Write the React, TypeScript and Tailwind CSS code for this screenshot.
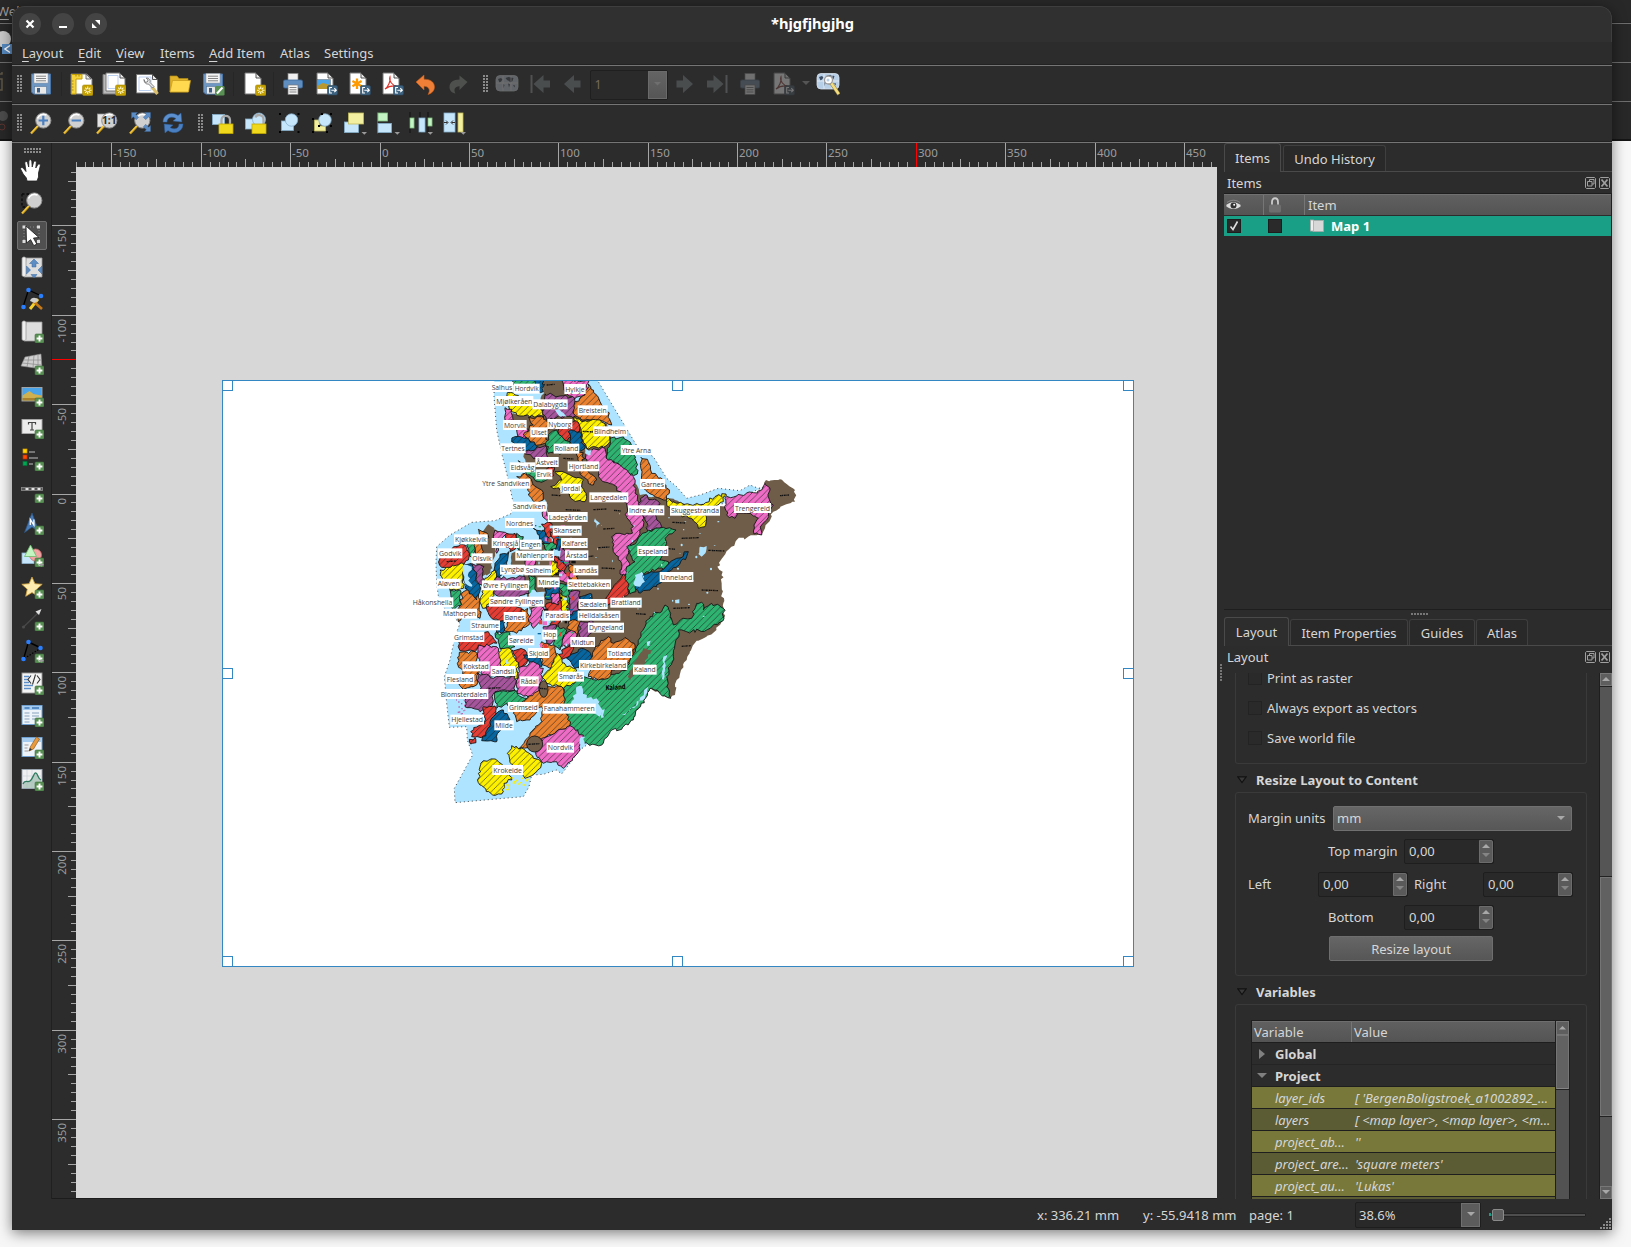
import React from "react";

type Kids = { children?: React.ReactNode };

/* ---------- small shared drawings ---------- */

function Ico({ children, dim }: Kids & { dim?: boolean }) {
  return (
    <svg width="24" height="24" viewBox="0 0 24 24" className={dim ? "shrink-0 opacity-35 grayscale-[60%]" : "shrink-0"}>
      {children}
    </svg>
  );
}

function Tool({ children, dim }: Kids & { dim?: boolean }) {
  return (
    <div className="flex h-8 w-[33px] shrink-0 items-center justify-center">
      <Ico dim={dim}>{children}</Ico>
    </div>
  );
}

function Grip({ cls }: { cls: string }) {
  return (
    <div className={"flex shrink-0 items-center " + cls}>
      <svg width="6" height="18" shapeRendering="crispEdges">
        {[0, 1, 2, 3, 4, 5].map((r) => (
          <g key={r} fill="#8a8a8a">
            <rect x="0" y={r * 3} width="2" height="2" />
            <rect x="3" y={r * 3} width="2" height="2" />
          </g>
        ))}
      </svg>
    </div>
  );
}

function Sep({ cls }: { cls: string }) {
  return (
    <div className={"flex h-6 shrink-0 justify-center " + cls}>
      <div className="h-6 w-px bg-[#262626]" />
    </div>
  );
}

const Plus = () => (
  <g>
    <rect x="15" y="15" width="9" height="9" rx="1.2" fill="#589153" stroke="#3f7040" strokeWidth=".6" />
    <path d="M19.5 16.6v5.8M16.6 19.5h5.8" stroke="#fff" strokeWidth="1.9" />
  </g>
);
const Sun = () => (
  <g>
    <rect x="13.5" y="13" width="10.5" height="10.5" rx="1.5" fill="#c4a000" stroke="#a88a10" strokeWidth=".6" />
    <path d="M18.7 14.5v7.6M15 18.3h7.6M16.2 15.7l5.2 5.2M21.4 15.7l-5.2 5.2" stroke="#fff6c0" strokeWidth="1.1" />
    <circle cx="18.7" cy="18.3" r="1.3" fill="#c4a000" />
  </g>
);
const Exp = () => (
  <g>
    <rect x="13.5" y="13.5" width="10" height="9.5" rx="1.5" fill="#3d6380" stroke="#2d4c63" strokeWidth=".6" />
    <path d="M18 15.5h-2.3v5.5H18M17.3 18.2h4.6M20.3 16.2l2 2-2 2" fill="none" stroke="#fff" strokeWidth="1.1" />
  </g>
);
const Page = () => <path d="M3 1h11l5 5v16H3z" fill="#fff" stroke="#777" strokeWidth="1" />;
const Fold = () => <path d="M14 1v5h5z" fill="#e8e8e8" stroke="#444" strokeWidth=".9" />;
const Floppy = () => (
  <g>
    <path d="M2.5 2h19v20h-17l-2-2z" fill="#6f97c4" stroke="#4a74a6" strokeWidth="1" />
    <rect x="5" y="1.5" width="14" height="9.5" fill="#f4f4f4" stroke="#999" strokeWidth=".5" />
    <path d="M7 4.2h10M7 6.5h10M7 8.8h10" stroke="#777" strokeWidth=".9" />
    <rect x="5.5" y="14.5" width="12" height="7.5" fill="#e8e8e8" stroke="#55779c" strokeWidth=".6" />
    <rect x="8" y="16" width="3" height="4.5" fill="#3c5f88" />
  </g>
);
const Lens = ({ children }: Kids) => (
  <g>
    <path d="M2 22.5l7-7.5" stroke="#f6c636" strokeWidth="2.3" />
    <path d="M2.6 23l7-7.5" stroke="#93701b" strokeWidth=".6" />
    <circle cx="14.3" cy="9.5" r="7.6" fill="#d0d0d0" stroke="#8e8e8e" strokeWidth="1" />
    <path d="M8.5 7.5a6.4 6.4 0 0 1 9-3.4" fill="none" stroke="#fff" strokeWidth="1.6" />
    {children}
  </g>
);
const Printer = () => (
  <g>
    <rect x="7" y="1.5" width="10" height="7" fill="#f0f0f0" stroke="#888" strokeWidth=".7" />
    <rect x="2.5" y="8" width="19" height="8" rx="1.5" fill="#5f8dc0" stroke="#3d6a9c" strokeWidth=".8" />
    <rect x="7" y="13" width="10" height="9.5" fill="#f4f4f4" stroke="#777" strokeWidth=".7" />
    <path d="M8.5 15.5h7M8.5 17.8h7M8.5 20h7" stroke="#777" strokeWidth=".9" />
  </g>
);
const Pdf = () => (
  <g>
    <Page />
    <Fold />
    <path d="M5 17c3-2 6-8 5-12-1.500 4 3 9 6.500 9-5-.6-8.500.6-11.500 3z" fill="none" stroke="#e0342c" strokeWidth="1.2" />
    <Exp />
  </g>
);
const Globe = () => (
  <g>
    <rect x="1" y="3.500" width="22" height="15.500" rx="4" fill="#b8cfe8" stroke="#d5dfea" strokeWidth=".8" />
    <path d="M3 7l3-1 1.500 1.500-1.500 2-1.500 1zM10.500 6l3-1 5 1-1 3-2 1.500-1.500-1.500-2-1zM8 12l1.500 1-1 3.500zM13 11l2 1.500-1 3zM18 13l2 .5-.5 2z" fill="#3d4f66" />
    <path d="M8 4v15M16 4v15M1 11h22" stroke="#eef4fa" strokeWidth=".7" />
  </g>
);
const MapSheet = () => (
  <g>
    <path d="M6 3h16v19H4z" fill="#dedede" stroke="#9a9a9a" strokeWidth=".8" />
    <path d="M2 3.500c0-2 4-2 4 0V20c0 2-4 2-4 0z" fill="#efefef" stroke="#9a9a9a" strokeWidth=".8" />
  </g>
);
const Corner = () => <path d="M18.500 21h5.500l-2.700 2.800z" fill="#9a9a9a" />;
const ArrowLeft = () => <path d="M3 12L13 3v5.500h6.500v7H13V21z" fill="#7b8b98" />;
const ArrowRight = () => <path d="M21 12L11 3v5.500H4.500v7H11V21z" fill="#7b8b98" />;

/* ---------- rulers ---------- */

const STEP = 89.38;
const range = (a: number, b: number) => Array.from({ length: b - a + 1 }, (_, i) => a + i);

function RulerH() {
  return (
    <svg width="1141" height="24" className="block shrink-0" shapeRendering="crispEdges">
      {range(-34, 93).map((i) => {
        const x = Math.floor(304 + (i * STEP) / 10);
        const big = i % 10 === 0;
        const h = big ? 24 : i % 5 === 0 ? 8 : 5;
        return <rect key={i} x={x} y={24 - h} width="1" height={h} fill={i === 60 ? "#ff0000" : "#a6a6a6"} />;
      })}
      {range(-3, 9).map((k) => (
        <text key={k} x={Math.floor(304 + k * STEP) + 2} y="14" fontSize="11.5" fill="#9c9c9c">
          {k * 50}
        </text>
      ))}
    </svg>
  );
}

function RulerV() {
  return (
    <svg width="24" height="1031" className="block shrink-0" shapeRendering="crispEdges">
      {range(-36, 78).map((i) => {
        const y = Math.floor(327 + (i * STEP) / 10);
        const w = i % 10 === 0 ? 24 : i % 5 === 0 ? 8 : 5;
        return <rect key={i} x={24 - w} y={y} width={w} height="1" fill="#a6a6a6" />;
      })}
      <rect x="0" y="192" width="24" height="1" fill="#ff0000" />
      {range(-3, 7).map((k) => (
        <text
          key={k}
          transform={`translate(14 ${Math.floor(327 + k * STEP) + 4}) rotate(-90)`}
          textAnchor="end"
          fontSize="11.5"
          fill="#9c9c9c"
        >
          {k * 50}
        </text>
      ))}
    </svg>
  );
}

/* ---------- map ---------- */

const COLORS: Record<string, string> = {
  y: "#fdf100",
  o: "#e9812f",
  p: "#ee6cc6",
  u: "#a5559b",
  g: "#2eb370",
  b: "#07669f",
  r: "#e33d34",
};

function rough(str: string, amp: number) {
  const n = str.trim().split(/[ ,]+/).map(Number);
  const pts: number[][] = [];
  for (let i = 0; i < n.length; i += 2) pts.push([n[i], n[i + 1]]);
  let seed = 7 + Math.abs(Math.round(n[0] * 13 + n[1] * 7));
  const rnd = () => {
    seed = (seed * 1103515245 + 12345) % 2147483648;
    return seed / 2147483648 - 0.5;
  };
  const out: string[] = [];
  pts.forEach((p, i) => {
    const q = pts[(i + 1) % pts.length];
    const len = Math.hypot(q[0] - p[0], q[1] - p[1]);
    const k = Math.max(1, Math.round(len / 9));
    for (let j = 0; j < k; j++) {
      const t = j / k;
      const a = j === 0 ? 0 : amp;
      out.push(`${(p[0] + (q[0] - p[0]) * t + rnd() * a).toFixed(1)},${(p[1] + (q[1] - p[1]) * t + rnd() * a).toFixed(1)}`);
    }
  });
  return out.join(" ");
}

const SEA =
  "283,30 282,80 290,180 305,250 325,330 340,400 335,430 285,452 215,457 150,495 110,530 108,580 110,640 118,700 180,760 165,800 150,870 133,920 140,1000 148,1072 200,1070 202,1110 218,1155 163,1255 165,1298 300,1286 370,1280 387,1250 395,1215 430,1213 470,1200 485,1212 540,1140 560,1125 620,1000 560,800 700,600 850,420 975,400 1095,350 1075,355 1050,345 1020,362 955,355 900,375 860,385 830,350 800,325 760,260 715,235 592,30";

const LAND =
  "430,30 490,30 530,100 620,160 640,210 660,300 705,340 720,375 808,385 850,400 975,410 1090,370 1098,330 1140,328 1185,360 1185,395 1120,425 1095,475 1085,492 1010,510 970,560 952,590 968,605 965,640 972,745 940,788 890,812 860,870 830,930 825,975 812,985 740,950 700,960 600,900 500,850 470,760 455,720 420,680 405,650 440,610 470,520 440,450 440,400 400,350 380,310 370,260 385,200 330,140 340,130 420,130 430,60";

const DISTRICTS: [string, string][] = [
  ["g", "340,30 430,30 425,60 345,65"],
  ["b", "405,30 432,30 430,65 408,62"],
  ["p", "485,30 568,30 556,72 522,90 492,60"],
  ["y", "322,68 345,75 400,105 435,122 425,137 370,138 335,125 320,105"],
  ["u", "435,72 480,78 518,80 525,115 520,145 480,140 440,150 428,132 430,100"],
  ["o", "565,42 580,60 600,95 622,125 635,165 600,150 545,150 520,130 525,95 555,75"],
  ["p", "315,113 335,118 345,155 315,150"],
  ["p", "348,175 385,178 375,208 355,205"],
  ["o", "385,142 430,138 445,160 440,225 400,222 370,195 400,165"],
  ["r", "475,170 530,150 538,185 500,213 475,195"],
  ["g", "450,190 470,180 490,205 510,215 520,250 445,250 438,215"],
  ["b", "505,185 538,185 555,235 530,245 510,215"],
  ["y", "522,138 545,155 600,150 635,185 630,215 610,232 560,235 545,205 540,170"],
  ["g", "630,205 670,200 700,235 712,312 680,318 655,280 620,275 622,235"],
  ["b", "345,200 385,205 412,230 395,250 370,240 335,215"],
  ["u", "370,245 440,230 442,260 470,290 425,275"],
  ["r", "440,296 462,290 460,318 445,318"],
  ["o", "528,250 550,248 550,290 590,330 580,345 565,340 540,300"],
  ["p", "560,240 615,235 625,270 660,285 700,320 705,370 732,420 730,470 715,500 690,530 680,560 690,590 675,615 660,612 665,580 640,545 635,500 660,490 690,492 700,470 680,440 680,400 650,350 600,325 595,300 560,290"],
  ["y", "465,305 510,315 550,330 545,350 558,370 555,395 520,390 500,365 452,350 485,330"],
  ["g", "355,272 405,300 450,325 420,335 380,315"],
  ["o", "375,310 400,345 425,360 430,390 410,400 385,375 385,350 350,320"],
  ["u", "735,375 780,400 765,430 785,470 745,485 735,450 715,400"],
  ["o", "723,262 745,275 755,310 790,330 808,370 800,390 760,375 722,350"],
  ["y", "800,387 830,400 900,405 945,380 978,372 970,395 915,435 915,470 895,475 875,445 830,430 805,410"],
  ["p", "975,385 1010,378 1060,368 1085,360 1095,340 1110,360 1105,380 1120,405 1100,450 1085,465 1085,495 1062,492 1062,465 1075,445 1040,430 1010,428 1005,445 980,435"],
  ["g", "727,490 790,472 828,480 800,500 800,520 780,570 805,575 800,595 740,605 715,615 708,665 690,672 672,640 680,590 705,575 690,545 680,530 710,515"],
  ["b", "865,545 860,560 815,600 790,625 770,650 715,668 705,655 720,615 780,605 830,565"],
  ["r", "670,612 685,640 685,672 640,705 610,705 625,675"],
  ["g", "795,705 812,730 820,765 850,745 875,745 890,700 905,697 910,720 935,700 970,715 972,745 920,780 860,785 835,780 820,860 800,920 812,985 750,955 700,1050 665,1078 635,1080 605,1125 540,1120 510,1070 490,1000 490,935 530,920 590,930 650,910 680,900 710,830 735,770 750,740 760,730 785,725"],
  ["o", "585,830 625,800 640,820 675,802 705,825 690,870 635,900 625,925 595,930 565,920 570,880"],
  ["r", "425,462 455,460 458,500 440,510"],
  ["b", "400,475 430,480 455,520 440,530"],
  ["g", "425,520 465,515 470,535 440,548"],
  ["r", "450,485 475,500 480,530 460,520"],
  ["p", "430,415 450,440 440,450 428,440"],
  ["b", "470,510 490,515 490,545 465,550"],
  ["p", "375,570 405,565 405,585 380,590"],
  ["g", "350,490 370,500 365,540 350,530"],
  ["p", "285,480 320,490 300,515 290,550 280,500"],
  ["r", "320,490 345,490 350,530 330,545 320,520"],
  ["o", "215,520 245,515 250,545 230,560"],
  ["g", "200,525 225,520 220,560 205,555"],
  ["o", "235,478 262,490 262,520 245,510"],
  ["r", "165,530 195,525 208,550 205,570 170,600 125,592 116,560"],
  ["y", "120,600 190,580 195,600 190,655 150,660 130,630"],
  ["g", "150,660 180,660 185,705 160,722"],
  ["o", "190,665 225,655 242,690 240,745 205,730 175,755 170,735"],
  ["b", "190,590 215,580 240,650 230,690 195,655"],
  ["u", "215,580 252,590 248,645 235,640"],
  ["b", "300,553 327,545 322,590 290,640 272,625 285,580"],
  ["y", "255,625 285,600 290,640 270,700 248,715 240,690"],
  ["u", "285,625 375,620 388,670 330,692 280,668"],
  ["g", "385,615 405,618 410,665 390,678"],
  ["r", "258,712 330,700 380,725 310,752 275,745"],
  ["o", "330,740 383,715 390,760 350,790 310,780"],
  ["p", "395,715 432,708 425,750 400,775 385,745"],
  ["b", "280,755 315,755 312,785 290,790"],
  ["r", "440,700 490,690 485,735 440,735"],
  ["b", "435,655 480,650 478,680 440,688"],
  ["y", "455,570 475,585 478,615 456,620"],
  ["r", "460,555 500,590 490,610 470,590"],
  ["u", "480,530 500,545 515,590 500,590 475,560"],
  ["p", "475,600 510,610 505,640 480,632"],
  ["o", "505,585 525,590 535,630 512,635"],
  ["g", "480,640 520,655 510,700 490,690"],
  ["p", "455,670 478,670 475,705 455,700"],
  ["y", "480,670 500,680 505,735 485,740"],
  ["u", "505,660 540,665 535,735 505,730"],
  ["b", "540,680 575,672 570,692 540,692"],
  ["b", "505,735 540,715 535,765 510,765"],
  ["r", "455,745 480,745 475,785 455,780"],
  ["o", "505,755 545,750 530,800 500,775"],
  ["u", "540,755 580,755 565,810 540,800"],
  ["p", "490,790 525,785 530,830 485,830"],
  ["u", "430,770 470,765 480,810 440,820"],
  ["g", "470,770 500,780 480,840 460,820"],
  ["r", "485,840 520,820 515,860 480,865"],
  ["o", "425,815 465,830 470,860 450,895 425,880"],
  ["b", "500,865 545,835 572,850 570,895 525,895"],
  ["y", "470,850 500,890 530,900 530,930 490,955 440,940 428,920 455,890"],
  ["g", "285,790 330,790 345,830 330,842 300,835"],
  ["r", "178,805 265,785 290,820 235,830 225,845 180,842"],
  ["o", "178,847 225,845 235,890 230,945 190,958 165,930 195,920 172,880"],
  ["p", "235,825 290,830 305,860 300,915 260,925 235,895"],
  ["y", "300,835 330,835 352,870 355,925 320,918 300,880"],
  ["r", "335,840 375,840 380,880 358,895"],
  ["b", "370,855 425,862 425,890 400,890"],
  ["p", "362,890 400,875 430,895 420,940 415,975 385,985 350,970 350,930"],
  ["u", "232,908 280,925 345,918 345,962 285,965 275,1010 240,1025 195,1010 200,980 240,960"],
  ["g", "285,967 340,962 380,985 370,1010 345,1020 320,1000 290,1015"],
  ["o", "375,990 435,945 490,955 492,1000 510,1065 430,1105 395,1137 355,1137 390,1090 425,1055 425,1010 390,1050 350,1055 340,1030"],
  ["r", "250,1010 285,1008 285,1040 250,1098 215,1100 212,1085 255,1060"],
  ["b", "285,1035 310,1020 330,1050 300,1070 290,1115 245,1112"],
  ["r", "208,1108 225,1103 228,1118 212,1122"],
  ["p", "425,1105 510,1067 550,1095 540,1140 490,1195 470,1175 430,1180 408,1155"],
  ["y", "335,1127 375,1140 425,1180 410,1205 375,1225 360,1190 330,1178 322,1150"],
  ["y", "250,1172 285,1167 320,1200 335,1230 312,1240 310,1265 278,1275 240,1245 235,1210"],
];

const LAKES = [
  "530,950 545,948 560,985 590,985 607,1020 598,1040 580,1030 560,1025 510,1010",
  "900,530 920,528 918,545 905,560 895,552",
  "705,615 725,605 735,635 718,650 700,640",
  "190,585 215,590 205,620 215,650 195,640",
  "555,235 575,240 572,255 555,250",
  "460,540 485,540 480,560 462,558",
  "700,1010 720,985 745,950 742,968 715,1000 680,1028 665,1035",
  "790,860 800,855 795,900 785,920",
  "785,905 796,900 790,930",
  "740,815 752,812 752,826 742,828",
  "465,120 485,125 500,140 480,140",
  "585,445 600,460 590,475",
  "605,1020 615,1018 612,1042 604,1044",
  "825,690 838,688 838,700 826,700",
  "395,660 435,665 430,690 380,700",
  "400,780 425,770 430,800 400,830",
  "318,870 326,865 328,880 318,882",
  "540,1105 556,1100 552,1125 542,1125",
];

const LABELS: [string, number, number, number][] = [
  ["Salhus", 275, 337, 52], ["Hordvik", 344, 416, 57], ["Hylkje", 496, 554, 58], ["Mjølkeråen", 289, 397, 94],
  ["Dalabygda", 400, 500, 104], ["Breistein", 536, 620, 122], ["Morvik", 312, 377, 166], ["Nyborg", 445, 514, 163],
  ["Ulset", 394, 440, 188], ["Blindheim", 582, 678, 185], ["Tertnes", 304, 374, 236], ["Rolland", 464, 535, 237],
  ["Ytre Arna", 665, 753, 241], ["Åstveit", 409, 473, 277], ["Eidsvåg", 332, 403, 293], ["Hjortland", 506, 595, 290],
  ["Ervik", 410, 454, 314], ["Garnes", 723, 792, 343], ["Ytre Sandviken", 247, 388, 342], ["Jordal", 484, 540, 357],
  ["Langedalen", 571, 682, 383], ["Sandviken", 338, 437, 411], ["Indre Arna", 687, 790, 422],
  ["Skuggestranda", 813, 957, 423], ["Trengereid", 1005, 1110, 415], ["Ladegården", 446, 560, 442],
  ["Nordnes", 318, 400, 460], ["Skansen", 461, 542, 483], ["Kjøkkelvik", 165, 260, 509], ["Kringsjå", 278, 355, 520],
  ["Engen", 363, 422, 525], ["Kalfaret", 486, 560, 520], ["Godvik", 117, 184, 551], ["Olsvik", 217, 275, 566],
  ["Møhlenpris", 349, 459, 558], ["Årstad", 498, 562, 557], ["Lyngbø", 303, 372, 600], ["Solheim", 377, 453, 602],
  ["Landås", 523, 592, 602], ["Unneland", 782, 877, 622], ["Aløven", 113, 179, 642], ["Øvre Fyllingen", 249, 385, 647],
  ["Minde", 415, 476, 638], ["Slettebakken", 505, 630, 644], ["Espeland", 715, 802, 544], ["Håkonshella", 38, 157, 698],
  ["Søndre Fyllingen", 270, 430, 696], ["Sædalen", 539, 620, 703], ["Brattland", 634, 722, 699],
  ["Mathopen", 129, 228, 732], ["Bønes", 314, 374, 742], ["Paradis", 436, 507, 738], ["Helldalsåsen", 536, 658, 738],
  ["Straume", 214, 297, 767], ["Dyngeland", 567, 669, 774], ["Grimstad", 162, 250, 802], ["Søreide", 327, 400, 812],
  ["Hop", 430, 469, 795], ["Midtun", 514, 582, 817], ["Skjold", 387, 445, 850], ["Totland", 624, 693, 850],
  ["Kokstad", 190, 266, 890], ["Sandsli", 275, 343, 904], ["Kirkebirkeland", 540, 679, 886], ["Kaland", 702, 767, 900],
  ["Flesland", 140, 220, 928], ["Rådal", 362, 413, 935], ["Smørås", 477, 549, 921], ["Blomsterdalen", 122, 262, 973],
  ["Grimseid", 327, 413, 1012], ["Fanahammeren", 431, 584, 1017], ["Hjellestad", 154, 249, 1050],
  ["Milde", 286, 338, 1067], ["Nordvik", 443, 519, 1134], ["Krokeide", 280, 366, 1201],
];

const SCRIBBLES: [number, number, number][] = [
  [1140, 377, 28], [817, 457, 38], [845, 505, 52], [925, 541, 48], [595, 533, 34], [605, 594, 40], [560, 560, 20],
  [905, 660, 50], [820, 715, 50], [708, 731, 30], [845, 829, 28], [497, 419, 45], [580, 419, 40], [642, 421, 20],
  [610, 477, 34], [490, 265, 30], [440, 45, 24], [548, 184, 32], [385, 1123, 34], [420, 955, 20], [265, 955, 36],
  [805, 536, 22], [140, 575, 28], [455, 375, 26],
];

function MapDrawing() {
  return (
    <svg width="911" height="585" viewBox="0 0 911 585" className="block">
      <defs>
        {Object.entries(COLORS).map(([k, c]) => (
          <pattern key={k} id={"hatch-" + k} width="19" height="19" patternUnits="userSpaceOnUse">
            <rect width="19" height="19" fill={c} />
            <path d="M-3 22L22 -3M-3 3L3 -3M16 22L22 16" stroke="#1c1c1c" strokeWidth="1.7" />
          </pattern>
        ))}
      </defs>
      <g transform="translate(177 -11) scale(.33333)">
        <polygon points={SEA} fill="#aee4ff" stroke="#222" strokeWidth="2.500" strokeDasharray="3 9" />
        <polygon points={rough(LAND, 9)} fill="#6f5d49" />
        <polygon points={rough("225,520 265,463 300,485 285,545 270,610 245,620 225,570", 8)} fill="#6f5d49" />
        <polygon points={rough("335,550 440,500 470,560 460,700 390,720 370,600 335,590", 8)} fill="#6f5d49" />
        {DISTRICTS.map(([c, p], i) => (
          <polygon key={i} points={rough(p, 10)} fill={`url(#hatch-${c})`} stroke="#111" strokeWidth="2.600" strokeLinejoin="round" />
        ))}
        <polygon points={rough("730,835 753,840 735,880 690,932 684,920 700,880", 6)} fill="#6f5d49" />
        <circle cx="404" cy="1122" r="24" fill="#6f5d49" stroke="#111" strokeWidth="2.500" />
        <ellipse cx="431" cy="957" rx="13" ry="25" fill="#6f5d49" stroke="#111" strokeWidth="2.500" />
        {LAKES.map((p, i) => (
          <polygon key={i} points={rough(p, 10)} fill="#aee4ff" />
        ))}
        {range(0, 44).map((i) => (
          <ellipse key={i} cx={560 + ((i * 137) % 400)} cy={430 + ((i * 83) % 320)} rx={1.2 + (i % 3)} ry={1 + ((i * 7) % 4)} fill="#aee4ff" />
        ))}
        {range(0, 60).map((i) => (
          <rect key={i} x={405 + ((i * 47) % 110)} y={465 + ((i * 71) % 390)} width={4 + (i % 4) * 3} height={4 + (i % 3) * 4} fill={["#07669f", "#111", "#e33d34", "#2eb370", "#aee4ff", "#ee6cc6"][i % 6]} />
        ))}
        {range(0, 12).map((i) => (
          <rect key={i} x={168 + ((i * 17) % 26)} y={988 + ((i * 41) % 46)} width={3 + (i % 3)} height="4" fill="#b86ab0" />
        ))}
        {range(0, 9).map((i) => (
          <rect key={i} x={335 + ((i * 11) % 48)} y={1222 + ((i * 7) % 24)} width="7" height="4" fill="#fdf100" />
        ))}
        <rect x="316" y="1245" width="11" height="14" fill="none" stroke="#fdf100" strokeWidth="3" />
        {SCRIBBLES.map(([x, y, w], i) => (
          <path key={i} d={`M${x} ${y}l${w} ${i % 2 ? 2 : -2}`} fill="none" stroke="#111" strokeWidth="4" strokeDasharray="5 1 3 2" />
        ))}
        <text x="617" y="961" fontSize="21" fontWeight="700" fill="#000" textLength="60" lengthAdjust="spacingAndGlyphs" transform="rotate(-4 617 961)">
          Kaland
        </text>
        {LABELS.map(([t, a, b, y]) => (
          <g key={t}>
            <rect x={a - 3} y={y - 16} width={b - a + 6} height="30" fill="#fff" />
            <text x={a} y={y + 7} fontSize="21.500" fill="#3c3c3c" textLength={b - a} lengthAdjust="spacingAndGlyphs" fontFamily="Open Sans, sans-serif">
              {t}
            </text>
          </g>
        ))}
      </g>
    </svg>
  );
}

/* ---------- panel widgets ---------- */

function Tri({ dir, fill = "#a8a8a8", w = 9 }: { dir: "up" | "down" | "right"; fill?: string; w?: number }) {
  const d = dir === "up" ? "M0 5L5 0l5 5z" : dir === "down" ? "M0 0h10L5 5z" : "M2 -2l6 5-6 5z";
  return (
    <svg width={w} height={w * 0.6} viewBox="0 0 10 6" className="block overflow-visible">
      <path d={d} fill={fill} />
    </svg>
  );
}

function Spin() {
  return (
    <div className="flex h-[25px] w-[90px] shrink-0 rounded-[2px] border border-[#1e1e1e] bg-[#292929]">
      <div className="flex flex-1 items-center pl-[4px]">0,00</div>
      <div className="flex w-[14px] flex-col items-center justify-evenly rounded-r-[2px] border border-[#6c6c6c] bg-[#5a5a5a]">
        <Tri dir="up" w={8} />
        <Tri dir="down" w={8} fill="#858585" />
      </div>
    </div>
  );
}

function DockTitle({ title, cls }: { title: string; cls: string }) {
  return (
    <div className={"flex shrink-0 items-center pr-[1px] pl-[3px] " + cls}>
      <span className="flex-1">{title}</span>
      <svg width="26" height="12" viewBox="0 0 26 12" fill="none" stroke="#a0a0a0" strokeWidth="1">
        <path d="M1.500.5h8l1 1v9l-1 1h-8l-1-1v-9z" />
        <path d="M4.500 4.500v-2h4.500v4.500H7M2.500 4.500h4.500v4.500H2.500z" />
        <path d="M15.500.5h8l1 1v9l-1 1h-8l-1-1v-9z" />
        <path d="M16.500 2.500l6 7M22.500 2.500l-6 7" strokeWidth="1.800" />
      </svg>
    </div>
  );
}

function Tab({ label, active, cls }: { label: string; active?: boolean; cls: string }) {
  return (
    <div
      className={
        (active
          ? "h-[29px] border-[#4a4a4a] bg-[#2d2d2d] pb-px "
          : "mt-[2px] h-[26px] border-[#3f3f3f] bg-[#292929] ") +
        "flex shrink-0 items-center justify-center rounded-t-[3px] border border-b-0 " +
        cls
      }
    >
      {label}
    </div>
  );
}

function Check({ label, cls }: { label: string; cls?: string }) {
  return (
    <div className={"flex h-[14px] items-center gap-[5px] pl-[12px] " + (cls ?? "")}>
      <div className="h-[14px] w-[14px] border border-[#232323] bg-[#2a2a2a]" />
      <span className="leading-[14px]">{label}</span>
    </div>
  );
}

function Head({ label, cls }: { label: string; cls: string }) {
  return (
    <div className={"flex shrink-0 items-center gap-[9px] pl-[2px] font-bold " + cls}>
      <svg width="10" height="8" viewBox="0 0 10 8">
        <path d="M.8.8h8.400L5 6.500z" fill="#3a3a3a" stroke="#111" strokeWidth="1.200" />
      </svg>
      {label}
    </div>
  );
}

const ROWS: [string, string][] = [
  ["layer_ids", "[ 'BergenBoligstroek_a1002892_..."],
  ["layers", "[ <map layer>, <map layer>, <m..."],
  ["project_ab...", "''"],
  ["project_are...", "'square meters'"],
  ["project_au...", "'Lukas'"],
  ["", ""],
];

const SIDE: React.ReactNode[] = [
  <path key="0" d="M7 22l-.6-3L3.200 15 .8 10.400c-.8-1.600 1.200-2.700 2.300-1.300L6 12.500 4.800 4c-.2-1.800 2.300-2.200 2.700-.4L8.700 8l.2-6c0-1.800 2.700-1.800 2.900 0L12.200 8l1.400-5c.5-1.600 2.900-1.200 2.700.5L15.800 9l2-3.300c.9-1.400 3-.5 2.500 1.100L18.500 14v4l-1.500 4z" fill="#fff" stroke="#222" strokeWidth=".8" />,
  <g key="1"><path d="M2 3h11M2 3v13h10" fill="none" stroke="#0a0a0a" strokeWidth="1.300" strokeDasharray="2.500 2" /><Lens /></g>,
  <g key="2"><rect x="4" y="4" width="15" height="14" fill="none" stroke="#999" strokeWidth=".8" strokeDasharray="1 2" /><path d="M2.500 2.500h3v3h-3zM17 2.500h3v3h-3zM2.500 17h3v3h-3zM17 17h3v3h-3z" fill="#ddd" /><path d="M6 3l13 11.500-5.500.6 3.300 6-3 1.600-3.200-6L6.500 20z" fill="#fff" stroke="#222" strokeWidth=".9" /></g>,
  <g key="3"><MapSheet /><path d="M14 4l4.500 4.500H16V12h-4V8.500H9.500zM6.500 11l4 4-4 4zM22 11l-4 4 4 4zM14 23l-3-3.500h6z" fill="#5c8cc4" stroke="#39689c" strokeWidth=".5" /></g>,
  <g key="4"><path d="M8.500 3L3 20M8.500 3l13 6" stroke="#000" strokeWidth="1.300" /><path d="M10 22l8-10" stroke="#f4cf30" strokeWidth="3" /><path d="M22 22l-9-8" stroke="#c67a17" strokeWidth="2.600" /><path d="M10 14c1-4 6-4 8-1l-3 3z" fill="#cfcfcf" /><circle cx="8.500" cy="3" r="2.300" fill="#2a7fff" /><circle cx="21" cy="9" r="2.300" fill="#2a7fff" /><circle cx="3.500" cy="20" r="2.300" fill="#2a7fff" /></g>,
  <g key="5"><MapSheet /><Plus /></g>,
  <g key="6"><path d="M5 6l16-3 1 15-21-3z" fill="#cfcfcf" stroke="#888" strokeWidth=".6" /><path d="M4 9l18 0M2.500 12l19 2M9 5l-2 11M14 4l-1 13M18 3.500l0 14" fill="none" stroke="#8a8a8a" strokeWidth=".7" /><Plus /></g>,
  <g key="7"><rect x="2" y="4.500" width="20" height="13.500" fill="#4ba3e8" stroke="#aaa" strokeWidth=".9" /><path d="M2.500 12.500l7-4.500 4 3 8 1.500v5h-19z" fill="#d0b04c" /><path d="M2.500 15h19v2.500h-19z" fill="#a9812e" /><Plus /></g>,
  <g key="8"><rect x="2" y="4.500" width="20" height="14" fill="#ececec" stroke="#aaa" strokeWidth=".9" /><path d="M8.500 9.500V7.500h7v2M12 7.500v7.500M10 15h4" fill="none" stroke="#444" strokeWidth="1.200" /><Plus /></g>,
  <g key="9"><rect x="3" y="2" width="4" height="4" fill="#ffd400" stroke="#d39c00" strokeWidth=".7" /><rect x="3" y="8" width="4" height="4" fill="#ff4a00" stroke="#b73200" strokeWidth=".7" /><rect x="3" y="14.500" width="4" height="4" fill="#00a651" stroke="#00743a" strokeWidth=".7" /><path d="M9 5h6M9 11h9M9 17h4" stroke="#8d8d8d" strokeWidth="1.500" /><Plus /></g>,
  <g key="10"><rect x="1" y="8" width="22" height="4" fill="#555" /><rect x="1.500" y="8.500" width="21" height="3" fill="none" stroke="#888" strokeWidth=".8" /><path d="M5.500 10h15" stroke="#e4e4e4" strokeWidth="1.800" strokeDasharray="3 3" /><Plus /></g>,
  <g key="11"><path d="M12 2l7 19-7-5-7.500 5.500z" fill="#4a7db8" stroke="#2d5788" strokeWidth=".7" /><path d="M10.300 14V8.500l3.600 5.500V8.500" fill="none" stroke="#fff" strokeWidth="1.300" /><Plus /></g>,
  <g key="12"><rect x="2" y="10" width="12" height="10.500" fill="#c6e6fb" stroke="#8fb4cf" strokeWidth=".8" /><circle cx="15.500" cy="12" r="6" fill="#f2a3a3" stroke="#d06c6c" strokeWidth=".8" /><path d="M10.500 2l6 11.500h-12z" fill="#c2f5c2" stroke="#6fb96f" strokeWidth=".8" /><Plus /><Corner /></g>,
  <g key="13"><path d="M12 2l2.900 6.700 7.300.6-5.500 4.900 1.600 7.100L12 17.600l-6.300 3.700 1.600-7.100L1.800 9.300l7.300-.6z" fill="#fdebb0" stroke="#cfa13b" strokeWidth=".8" /><Plus /></g>,
  <g key="14"><path d="M3.500 20L18 6" stroke="#484848" strokeWidth="1.300" /><path d="M21.500 2l-2.500 6-3.500-3.500z" fill="#e0e0e0" /><circle cx="3.500" cy="20" r="1.500" fill="#4c4c4c" /><Plus /></g>,
  <g key="15"><path d="M8.500 3L3.500 20M8.500 3l12.500 6" stroke="#000" strokeWidth="1.400" /><path d="M21 9L3.500 20" stroke="#000" strokeWidth="1.200" strokeDasharray="1.500 1.500" /><circle cx="8.500" cy="3" r="2.300" fill="#2a7fff" /><circle cx="20.500" cy="9" r="2.300" fill="#2a7fff" /><circle cx="3.500" cy="20" r="2.300" fill="#2a7fff" /><Plus /><Corner /></g>,
  <g key="16"><rect x="2" y="2" width="20" height="20" fill="#f4f4f4" stroke="#999" strokeWidth=".9" /><path d="M4 5.500h5M4 8.500h4M4 11.500h5M4 14.500h9M4 17.500h7" stroke="#5d8fca" strokeWidth="1.700" /><path d="M11 4.500L8 8.500l3 4M17 4.500l3 4-3 4M15.500 3.500l-3 10" fill="none" stroke="#333" strokeWidth="1.100" /><Plus /></g>,
  <g key="17"><rect x="2" y="2.500" width="20" height="19" fill="#eef3f9" stroke="#6f9fd0" strokeWidth="1" /><rect x="2.500" y="3" width="19" height="4" fill="#a5cbee" /><path d="M4.500 5h5M12 5h7" stroke="#3f78b8" strokeWidth="1.400" /><path d="M4.500 10h5M12 10h7M4.500 13h5M12 13h7M4.500 16h5M12 16h3M4.500 19h5" stroke="#8aa4c0" strokeWidth="1.200" /><Plus /></g>,
  <g key="18"><rect x="2" y="2.500" width="20" height="19" fill="#eef3f9" stroke="#6f9fd0" strokeWidth="1" /><rect x="2.500" y="3" width="19" height="4" fill="#a5cbee" /><path d="M4.500 10h4M4.500 13h3M4.500 16h4" stroke="#999" strokeWidth="1.200" /><path d="M9 16l1.500-4.500L16.500 2l3 2-6 10z" fill="#e99a3c" stroke="#8f5a1c" strokeWidth=".7" /><path d="M9 16l1-3 2 1.500z" fill="#333" /><Plus /></g>,
  <g key="19"><rect x="2" y="2.500" width="20" height="19" fill="#f0f0f0" stroke="#9ba8b5" strokeWidth=".9" /><path d="M7 3v18M12 3v18M2 9h20M2 15h20" stroke="#cfd6dc" strokeWidth=".8" /><path d="M3 17c2-5 4-1 7-3s4-9 6-8 2 6 5 7v8H3z" fill="#9ebdb0" opacity=".7" /><path d="M3 17c2-5 4-1 7-3s4-9 6-8 2 6 5 7" fill="none" stroke="#2f7a5f" strokeWidth="1.300" /><Plus /></g>,
];

const HANDLES = [
  "left-[-1px] top-[-1px]", "left-[449px] top-[-1px]", "right-[-1px] top-[-1px]",
  "left-[-1px] top-[287px]", "right-[-1px] top-[287px]",
  "left-[-1px] bottom-[-1px]", "left-[449px] bottom-[-1px]", "right-[-1px] bottom-[-1px]",
];

const Menu = ({ first, rest, cls, plain }: { first: string; rest: string; cls: string; plain?: boolean }) => (
  <span className={"shrink-0 " + cls}>
    <span className={plain ? "" : "underline decoration-1 underline-offset-[3px]"}>{first}</span>
    {rest}
  </span>
);

export default function App() {
  return (
    <div className="relative h-[1247px] w-[1631px] overflow-hidden bg-[#f7f7f7] font-['Noto_Sans',sans-serif] text-[13px] leading-[18px] text-[#d6d6d6]">
      {/* window behind */}
      <div className="flex h-[141px] flex-col border-b-2 border-[#151515] bg-[#282828]">
        <div className="h-[23px] border-b border-[#222]">
          <span className="relative -left-[3px] top-[2px] text-[#9a9a9a]"><span className="underline underline-offset-[3px]">W</span>el</span>
        </div>
        <div className="h-[39px] border-t border-[#6e6e6e]">
          <svg width="12" height="38"><circle cx="3" cy="15" r="8" fill="#c9c9c9" /><rect x="2" y="20" width="12" height="10" fill="#5588bd" /><path d="M10 21.500L5 25l5 3.500" fill="none" stroke="#fff" strokeWidth="1.500" /></svg>
        </div>
        <div className="h-[39px] border-t border-[#6e6e6e]">
          <svg width="12" height="38"><path d="M0 11h2v-2M0 27h2V16H0" fill="none" stroke="#5f5546" strokeWidth="1.500" /></svg>
        </div>
        <div className="flex-1 border-t border-[#6e6e6e]">
          <svg width="12" height="34"><circle cx="3" cy="14" r="5" fill="#4c4c4c" /><circle cx="2" cy="25" r="3" fill="none" stroke="#5c3430" /></svg>
        </div>
      </div>

      {/* layout window */}
      <div className="absolute left-[12px] top-[6px] flex h-[1224px] w-[1600px] flex-col overflow-hidden rounded-t-[12px] bg-[#2c2c2c] shadow-[0_3px_14px_rgba(0,0,0,0.5)]">
        {/* title bar */}
        <div className="flex h-[36px] shrink-0 items-center rounded-t-[12px] border-x border-t border-[#3e3e3e] bg-[#303030] pb-px pl-[6px]">
          <div className="flex w-[200px] gap-[11px]">
            <div className="flex size-[22px] items-center justify-center rounded-full bg-[#444]"><svg width="10" height="10"><path d="M1.500 1.500l7 7M8.500 1.500l-7 7" stroke="#fff" strokeWidth="2.200" /></svg></div>
            <div className="flex size-[22px] items-center justify-center rounded-full bg-[#444]"><svg width="10" height="10"><path d="M1 8h8" stroke="#fff" strokeWidth="2" /></svg></div>
            <div className="flex size-[22px] items-center justify-center rounded-full bg-[#444]"><svg width="10" height="10"><path d="M4 1h5v5zM1 4v5h5z" fill="#fff" /></svg></div>
          </div>
          <div className="mr-[205px] flex-1 pb-[3px] text-center text-[14.67px] font-bold text-white">*hjgfjhgjhg</div>
        </div>

        {/* menu bar */}
        <div className="flex h-[23px] shrink-0 items-center border-b border-[#222] pb-[1px] pl-[10px]">
          <Menu cls="w-[56px]" first="L" rest="ayout" />
          <Menu cls="w-[38px]" first="E" rest="dit" />
          <Menu cls="w-[44px]" first="V" rest="iew" />
          <Menu cls="w-[49px]" first="I" rest="tems" />
          <Menu cls="w-[71px]" first="A" rest="dd Item" />
          <Menu cls="w-[44px]" first="A" rest="tlas" plain />
          <Menu cls="w-[60px]" first="S" rest="ettings" plain />
        </div>

        {/* toolbar: layout + atlas */}
        <div className="flex h-[39px] shrink-0 items-center border-t border-b border-t-[#757575] border-b-[#222] bg-[#2c2c2c] pb-[2px]">
          <Grip cls="w-[12.5px] pl-[5px]" />
          <Tool><Floppy /></Tool>
          <Sep cls="w-[7px]" />
          <Tool>
            <path d="M2 2h16l5 5v15H2z" fill="#fff" stroke="#777" />
            <path d="M17 2v5h5z" fill="#e8e8e8" stroke="#555" strokeWidth=".8" />
            <path d="M2.500 2.500H13V7H7v15H2.500z" fill="#f5d33c" stroke="#c4a000" />
            <path d="M7 2.500v2M10 2.500v2M2.500 9h2M2.500 12h2M2.500 15h2M2.500 18h2" stroke="#a88a10" />
            <Sun />
          </Tool>
          <Tool>
            <path d="M1 2.500h15V22H1z" fill="#b9b9b9" stroke="#777" />
            <path d="M4 1h14l5 5v13H4z" fill="#fff" stroke="#777" />
            <path d="M18 1v5h5z" fill="#e8e8e8" stroke="#444" strokeWidth=".9" />
            <path d="M6 3.500h10v13H6z" fill="#fff" stroke="#bcd0f0" />
            <Sun />
          </Tool>
          <Tool>
            <path d="M1.500 2.500h16l5 5V21h-21z" fill="#fff" stroke="#777" />
            <path d="M17.500 2.500v5h5z" fill="#e8e8e8" stroke="#444" strokeWidth=".9" />
            <path d="M4 5h12v13.500H4z" fill="none" stroke="#bcd0f0" />
            <path d="M17 15l5.500 7" stroke="#d9be6c" strokeWidth="3.200" />
            <path d="M9 7.500c0 3 2 5 4.500 4.500l4 4 1.500-1.500-4-4c.8-2.500-1-4.700-3.800-4.500l2 2-1 2-2 .3z" fill="#e8e8e8" stroke="#666" strokeWidth=".8" />
          </Tool>
          <Tool>
            <path d="M2 4h7l2 2.500h9V20H2z" fill="#e0b32a" stroke="#b58c15" strokeWidth=".7" />
            <path d="M4.500 8.500H22.500L20.500 20H2z" fill="#ffd94f" stroke="#c69a1c" strokeWidth=".7" />
          </Tool>
          <Tool>
            <Floppy />
            <rect x="14" y="14" width="9.500" height="9.500" rx="1.200" fill="#589153" />
            <path d="M16 21.500l5.500-6" stroke="#fff" strokeWidth="2" />
          </Tool>
          <Sep cls="w-[8px]" />
          <Tool><Page /><Fold /><Sun /></Tool>
          <Sep cls="w-[6px]" />
          <Tool><Printer /></Tool>
          <Tool>
            <Page /><Fold />
            <rect x="3.500" y="7.500" width="13" height="9" fill="#4ba3e8" stroke="#6c6c6c" strokeWidth=".5" />
            <path d="M3.500 14l5-3 8 2v4h-13z" fill="#b8982f" />
            <Exp />
          </Tool>
          <Tool>
            <Page /><Fold />
            <path d="M10 6.500v10.500M5.400 9l9.200 5.300M14.600 9l-9.200 5.300" stroke="#ff9a00" strokeWidth="2.300" />
            <Exp />
          </Tool>
          <Tool><Pdf /></Tool>
          <Tool>
            <path d="M3 10l8-7v4.200c7 0 10.500 3.300 10.500 7.800 0 3.500-2.500 6.500-6.500 7.500 2.500-4 1.500-8-4-8.200V18z" fill="#ef7f37" stroke="#c25a18" strokeWidth=".6" />
          </Tool>
          <Tool>
            <path d="M21.500 10l-8-6.500v4C7 7.500 3.500 10.500 3.500 15c0 3.500 2.500 6 6 6.500-2-3.500-1-7 4-7.200V18z" fill="#4d504d" />
          </Tool>
          <Grip cls="w-[16px] pl-[8px]" />
          <Tool dim><Globe /></Tool>
          <Tool dim><path d="M3.500 3v18" stroke="#8b98a3" strokeWidth="2" /><g transform="translate(2.500 0)"><ArrowLeft /></g></Tool>
          <Tool dim><ArrowLeft /></Tool>
          <div className="mt-[2px] flex h-[30px] w-[78px] shrink-0 rounded-[2px] border border-[#1f1f1f] bg-[#2a2a2a]">
            <div className="flex flex-1 items-center pl-[4px] text-[12.500px] text-[#75695c]">1</div>
            <div className="flex w-[19px] items-center justify-center border border-[#6a6a6a] bg-linear-to-b from-[#646464] to-[#565656]"><Tri dir="down" w={7} fill="#6f6f6f" /></div>
          </div>
          <Tool dim><ArrowRight /></Tool>
          <Tool dim><path d="M21.500 3v18" stroke="#8b98a3" strokeWidth="2" /><g transform="translate(-2.500 0)"><ArrowRight /></g></Tool>
          <Tool dim><Printer /></Tool>
          <Tool dim><Pdf /></Tool>
          <div className="flex w-[12px] justify-center"><Tri dir="down" w={8} fill="#555" /></div>
          <Tool>
            <g transform="translate(0 -2)"><Globe /></g>
            <circle cx="12.500" cy="8" r="4" fill="#fff" stroke="#9a9a9a" strokeWidth="1.300" />
            <circle cx="12" cy="8" r="1.500" fill="#b8cfe8" />
            <path d="M15.500 11.500l7.500 11" stroke="#8a7a3c" strokeWidth="3.600" />
            <path d="M15.500 11.500l7.200 10.500" stroke="#f3dd7e" strokeWidth="2.600" />
          </Tool>
        </div>

        {/* toolbar: navigation + actions */}
        <div className="flex h-[38px] shrink-0 items-center border-t border-b border-t-[#757575] border-b-[#222]">
          <Grip cls="w-[12.5px] pl-[5px]" />
          <Tool><Lens><path d="M14.300 4.800v9.400M9.600 9.500h9.400" stroke="#4a7fc0" strokeWidth="2.200" /></Lens></Tool>
          <Tool><Lens><path d="M9.600 9.500h9.400" stroke="#4a7fc0" strokeWidth="2.200" /></Lens></Tool>
          <Tool>
            <rect x="2.500" y="3" width="10" height="13" fill="#e4e4e4" stroke="#999" strokeWidth=".7" />
            <Lens />
            <text x="7" y="13" fontSize="10" fontWeight="700" fill="#2b2b2b" textLength="14.500" lengthAdjust="spacingAndGlyphs">1:1</text>
          </Tool>
          <Tool>
            <Lens />
            <path d="M3.500 1.500h6L7.700 3.300l3 3L8.300 8.700l-3-3L3.500 7.500zM22.500 1.500v6l-1.800-1.800-3 3-2.400-2.400 3-3-1.800-1.800zM22.500 20.500h-6l1.800-1.800-3-3 2.400-2.400 3 3 1.800-1.800z" fill="#5c8cc4" stroke="#39689c" strokeWidth=".4" />
          </Tool>
          <Tool>
            <path d="M2 11c0-8 9-11 15-6.500l3-2.500.8 9-8.800-1 3-2.500C11 5 6 6 6 11z" fill="#5c8fce" stroke="#2f62a0" strokeWidth=".5" />
            <path d="M22 13c0 8-9 11-15 6.500l-3 2.500-.8-9 8.800 1-3 2.500c4 2.500 9 1.500 9-3.500z" fill="#4a80c2" stroke="#2f62a0" strokeWidth=".5" />
          </Tool>
          <Grip cls="w-[16.500px] pl-[8px]" />
          <Tool>
            <rect x="1.500" y="3.500" width="12" height="10" fill="#c6e6fb" stroke="#86aeca" strokeWidth=".8" />
            <path d="M10.500 14V9c0-5.500 8.500-5.500 8.500 0v5" fill="none" stroke="#a8a8a8" strokeWidth="2.300" />
            <rect x="8" y="13" width="14" height="9.500" fill="#f0d91c" stroke="#c0a800" strokeWidth=".8" />
          </Tool>
          <Tool>
            <rect x="1.500" y="8" width="12" height="10" fill="#c6e6fb" stroke="#86aeca" strokeWidth=".8" />
            <circle cx="15" cy="8.500" r="6.500" fill="#c6e6fb" stroke="#86aeca" strokeWidth=".8" />
            <path d="M11.500 6.500c1-4 8-3 8 2v5" fill="none" stroke="#a8a8a8" strokeWidth="2.300" />
            <rect x="8" y="13" width="14" height="9.500" fill="#f0d91c" stroke="#c0a800" strokeWidth=".8" />
          </Tool>
          <Tool>
            <rect x="4.500" y="10" width="12" height="9.500" fill="#c6e6fb" stroke="#86aeca" strokeWidth=".8" />
            <circle cx="14.500" cy="9" r="6.200" fill="#c6e6fb" stroke="#86aeca" strokeWidth=".8" />
            <path d="M2 2h2v2H2zM20.500 2h2v2h-2zM2 20h2v2H2zM20.500 20h2v2h-2z" fill="#000" />
          </Tool>
          <Tool>
            <path d="M4.500 9h5v6h6v5h-11z" fill="#f2efa0" stroke="#bfb95a" strokeWidth=".8" />
            <circle cx="15" cy="9" r="6.200" fill="#c6e6fb" stroke="#86aeca" strokeWidth=".8" />
            <path d="M11 2h2v2h-2zM20 2h2v2h-2zM20 14h2v2h-2zM2 7h2v2H2zM2 20h2v2H2zM8 14h2v2H8zM16 20h2v2h-2z" fill="#000" />
          </Tool>
          <Tool>
            <rect x="1.500" y="11" width="14" height="10.500" fill="#c6e6fb" stroke="#86aeca" strokeWidth=".8" />
            <rect x="5.500" y="2" width="15" height="11" fill="#f2efa0" stroke="#bfb95a" strokeWidth=".8" />
            <Corner />
          </Tool>
          <Tool>
            <path d="M1.500 1.500v21" stroke="#555" />
            <rect x="2" y="2" width="9.500" height="8" fill="#c4f4c4" stroke="#7fbf7f" strokeWidth=".8" />
            <rect x="2" y="12.500" width="13.500" height="9" fill="#c6e6fb" stroke="#86aeca" strokeWidth=".8" />
            <Corner />
          </Tool>
          <Tool>
            <path d="M1 1v21M11 1v21M19 1v21" stroke="#111" />
            <rect x="1" y="7" width="4" height="10" fill="#c4f4c4" stroke="#7fbf7f" strokeWidth=".8" />
            <rect x="10" y="7" width="6" height="14" fill="#c6e6fb" stroke="#86aeca" strokeWidth=".8" />
            <rect x="19" y="7" width="4" height="8" fill="#c4f4c4" stroke="#7fbf7f" strokeWidth=".8" />
            <Corner />
          </Tool>
          <Tool>
            <rect x="2" y="2" width="11" height="19" fill="#c6e6fb" stroke="#86aeca" strokeWidth=".8" />
            <rect x="16" y="2" width="5" height="19" fill="#f2efa0" stroke="#bfb95a" strokeWidth=".8" />
            <path d="M2 11.500h3.500M4 9.500l2 2-2 2M13 11.500H9.500M11 9.500l-2 2 2 2" fill="none" stroke="#333" />
            <Corner />
          </Tool>
        </div>

        {/* body */}
        <div className="flex h-[1057px] shrink-0 border-t border-[#757575]">
          {/* toolbox */}
          <div className="flex w-[40px] shrink-0 flex-col items-center border-r border-[#202020]">
            <svg width="18" height="6" className="mt-[5px] mb-[1px] ml-[3px] shrink-0" shapeRendering="crispEdges">
              {[0, 1, 2, 3, 4, 5].map((c) => (
                <g key={c} fill="#8a8a8a"><rect x={c * 3} y="0" width="2" height="2" /><rect x={c * 3} y="3" width="2" height="2" /></g>
              ))}
            </svg>
            {SIDE.map((s, i) => (
              <div key={i} className="flex h-[32px] w-[40px] shrink-0 items-center justify-center pl-px">
                <div className={"flex h-[29px] w-[30px] items-center justify-center rounded-[2px] border " + (i === 2 ? "border-[#707070] bg-[#505050]" : "border-transparent")}>
                  <Ico>{s}</Ico>
                </div>
              </div>
            ))}
          </div>

          {/* canvas with rulers */}
          <div className="flex w-[1165px] shrink-0 flex-col">
            <div className="flex h-[24px] shrink-0 pl-[24px]"><RulerH /></div>
            <div className="flex h-[1032px] border-b border-[#1c1c1c]">
              <RulerV />
              <div className="h-[1031px] w-[1141px] bg-[#d7d7d7] pt-[213px] pl-[146px]">
                <div className="relative h-[587px] w-[912px] border border-[#3388c4] bg-white">
                  <MapDrawing />
                  {HANDLES.map((h) => (
                    <div key={h} className={"absolute size-[11px] border border-[#3388c4] bg-white " + h} />
                  ))}
                </div>
              </div>
            </div>
          </div>

          {/* docks */}
          <div className="flex w-[7px] shrink-0 flex-col pt-[521px] pl-[3px]">
            <svg width="2" height="18" shapeRendering="crispEdges">
              {[0, 1, 2, 3, 4, 5].map((r) => <rect key={r} y={r * 3} width="2" height="2" fill="#777" />)}
            </svg>
          </div>
          <div className="flex w-[388px] shrink-0 flex-col">
            <div className="flex h-[29px] shrink-0 items-start border-b border-[#4a4a4a]">
              <Tab label="Items" active cls="w-[57px]" />
              <Tab label="Undo History" cls="ml-[2px] w-[103px]" />
            </div>
            <DockTitle title="Items" cls="h-[21px]" />
            <div className="flex h-[417px] shrink-0 flex-col border border-[#1e1e1e] border-l-0">
              <div className="flex h-[21px] shrink-0 border-t border-[#707070] bg-linear-to-b from-[#606060] to-[#545454]">
                <div className="flex w-[40px] items-center border-r border-[#767676] pl-[2px]">
                  <svg width="15" height="12"><path d="M0 7c3-5 11-5 15 0-4 4-11 4-15 0z" fill="#ddd" /><circle cx="7.500" cy="6.500" r="3" fill="#333" /><circle cx="8.200" cy="5.800" r="1" fill="#fff" /><path d="M1 3.500c4-3 9-3 13 0" fill="none" stroke="#888" /></svg>
                </div>
                <div className="flex w-[41px] items-center border-r border-[#767676] pl-[5px]">
                  <svg width="12" height="16"><path d="M3 8V5c0-5 6-5 6 0v3" fill="none" stroke="#ccc" strokeWidth="1.800" /><rect x="0" y="7.500" width="12" height="8" rx="1.500" fill="#6e6e6e" /></svg>
                </div>
                <div className="flex items-center pl-[3px]">Item</div>
              </div>
              <div className="mt-px flex h-[20px] shrink-0 items-center bg-[#189f85] pb-px pl-[3px] font-bold text-white">
                <div className="flex size-[14px] items-center justify-center border border-[#1d1d1d] bg-[#2a2a2a]">
                  <svg width="10" height="10"><path d="M1.500 5.500L4 8.500l4.500-8" fill="none" stroke="#ddd" strokeWidth="1.600" /></svg>
                </div>
                <div className="ml-[27px] size-[14px] border border-[#1d1d1d] bg-[#2a2a2a]" />
                <svg width="14" height="14" className="ml-[28px] mr-[7px]"><rect x="3" y="1.500" width="10.500" height="11" fill="#d8d8d8" stroke="#aaa" strokeWidth=".8" /><rect x=".5" y="1" width="3" height="11" fill="#eee" stroke="#aaa" strokeWidth=".8" /></svg>
                Map 1
              </div>
            </div>
            <div className="flex h-[7px] shrink-0 items-center justify-center pl-[4px]">
              <svg width="18" height="2" shapeRendering="crispEdges">{[0, 1, 2, 3, 4, 5].map((c) => <rect key={c} x={c * 3} width="2" height="2" fill="#777" />)}</svg>
            </div>
            <div className="flex h-[29px] shrink-0 items-start border-b border-[#4a4a4a]">
              <Tab label="Layout" active cls="w-[65px]" />
              <Tab label="Item Properties" cls="ml-px w-[118px]" />
              <Tab label="Guides" cls="ml-px w-[66px]" />
              <Tab label="Atlas" cls="ml-px w-[52px]" />
            </div>
            <DockTitle title="Layout" cls="mb-[5px] h-[22px]" />

            <div className="flex h-[526px] shrink-0 overflow-hidden">
              <div className="w-[375px] shrink-0 pl-[11px]">
                <div className="flex h-[91px] w-[352px] flex-col rounded-b-[3px] border border-t-0 border-[#3a3a3a]">
                  <Check label="Print as raster" cls="-mt-[2px]" />
                  <Check label="Always export as vectors" cls="mt-[16px]" />
                  <Check label="Save world file" cls="mt-[16px]" />
                </div>
                <Head label="Resize Layout to Content" cls="h-[28px] pt-[3px]" />
                <div className="h-[184px] w-[352px] rounded-[3px] border border-[#3a3a3a] pt-[12px] pl-[12px]">
                  <div className="flex h-[26px] items-center">
                    <span className="w-[85px]">Margin units</span>
                    <div className="flex h-[25px] w-[239px] items-center justify-between rounded-[2px] border border-[#707070] bg-linear-to-b from-[#666] to-[#575757] pr-[6px] pl-[3px]">
                      mm <Tri dir="down" w={8} />
                    </div>
                  </div>
                  <div className="mt-[7px] flex h-[26px] items-center pl-[80px]"><span className="w-[76px]">Top margin</span><Spin /></div>
                  <div className="mt-[7px] flex h-[26px] items-center">
                    <span className="w-[70px]">Left</span><Spin /><span className="w-[75px] pl-[6px]">Right</span><Spin />
                  </div>
                  <div className="mt-[7px] flex h-[26px] items-center pl-[80px]"><span className="w-[76px]">Bottom</span><Spin /></div>
                  <div className="mt-[6px] ml-[81px] flex h-[25px] w-[164px] items-center justify-center rounded-[2px] border border-[#6e6e6e] bg-linear-to-b from-[#666] to-[#565656]">Resize layout</div>
                </div>
                <Head label="Variables" cls="h-[28px] pt-[4px]" />
                <div className="h-[240px] w-[352px] rounded-[3px] border border-[#3a3a3a] pt-[15px] pl-[15px]">
                  <div className="flex h-[260px] w-[319px] border border-[#1e1e1e]">
                    <div className="w-[303px] shrink-0">
                      <div className="flex h-[21px] border-t border-[#6e6e6e] bg-linear-to-b from-[#606060] to-[#545454]">
                        <div className="flex w-[100px] items-center border-r border-[#767676] pl-[2px]">Variable</div>
                        <div className="flex items-center pl-[2px]">Value</div>
                      </div>
                      <div className="flex h-[22px] items-center border-t border-[#1e1e1e] pt-px pl-[5px] font-bold"><span className="w-[18px]"><Tri dir="right" fill="#808080" w={10} /></span>Global</div>
                      <div className="flex h-[22px] items-center border-t border-[#242424] pt-px pl-[5px] font-bold"><span className="w-[18px]"><Tri dir="down" fill="#808080" w={10} /></span>Project</div>
                      {ROWS.map(([a, b], i) => (
                        <div key={i} className={"flex h-[22px] items-center border-t border-[#1e1e1e] whitespace-pre italic " + (i % 2 ? "bg-[#5b5c33]" : "bg-[#777839]")}>
                          <span className="w-[103px] pl-[23px]">{a}</span>
                          <span>{b}</span>
                        </div>
                      ))}
                    </div>
                    <div className="w-[14px] shrink-0 border-l border-[#1e1e1e] bg-[#525252]">
                      <div className="flex h-[14px] items-center justify-center border border-[#777] bg-[#5e5e5e]"><Tri dir="up" w={7} /></div>
                      <div className="h-[54px] border border-[#757575] border-b-[#858585] bg-[#626262] shadow-[0_1px_0_#222]" />
                    </div>
                  </div>
                </div>
              </div>
              {/* dock scrollbar */}
              <div className="flex w-[13px] shrink-0 flex-col border-l border-[#1e1e1e] bg-[#555]">
                <div className="flex h-[13px] shrink-0 items-center justify-center border border-[#777] bg-[#5e5e5e]"><Tri dir="up" w={8} /></div>
                <div className="h-[191px] shrink-0 border-y border-[#222]" />
                <div className="h-[239px] shrink-0 border border-[#757575] bg-[#616161] shadow-[0_1px_0_#222]" />
                <div className="flex-1" />
                <div className="flex h-[13px] shrink-0 items-center justify-center border border-[#777] bg-[#5e5e5e]"><Tri dir="down" w={8} /></div>
              </div>
            </div>
          </div>
        </div>

        {/* status bar */}
        <div className="flex h-[31px] shrink-0 items-center pl-[1025px]">
          <span className="w-[106px]">x: 336.21 mm</span>
          <span className="w-[106px]">y: -55.9418 mm</span>
          <span className="w-[106px]">page: 1</span>
          <div className="flex h-[26px] w-[126px] rounded-[2px] border border-[#1e1e1e] bg-[#292929]">
            <div className="flex flex-1 items-center pl-[3px]">38.6%</div>
            <div className="flex w-[19px] items-center justify-center border border-[#707070] bg-[#5c5c5c]"><Tri dir="down" w={8} /></div>
          </div>
          <div className="relative ml-[8px] h-[4px] w-[97px] rounded-[1px] border border-[#222] bg-[#4e4e4e]">
            <div className="absolute top-[-1px] left-[-1px] h-[3px] w-[2px] bg-[#189f85]" />
            <div className="absolute top-[-5px] left-[2px] size-[12px] rounded-[2px] border border-[#8a8a8a] bg-[#5f5f5f]" />
          </div>
          <svg width="12" height="12" className="mt-[18px] ml-[14px]" shapeRendering="crispEdges" fill="#8a8a8a">
            {range(0, 3).flatMap((r) => range(0, r).map((c) => <rect key={r + "-" + c} x={9 - c * 3} y={r * 3} width="2" height="2" />))}
          </svg>
        </div>
      </div>
    </div>
  );
}
